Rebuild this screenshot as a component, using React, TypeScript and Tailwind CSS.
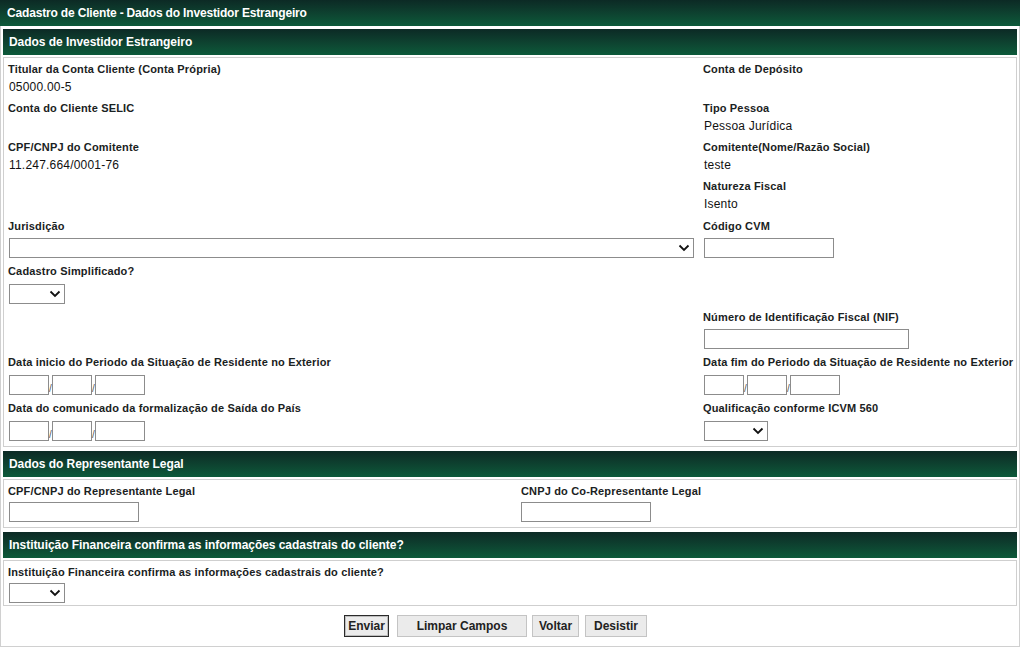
import React from "react";

const F = { fontFamily: '"Liberation Sans", Arial, sans-serif' };

function Chevron() {
  return (
    <svg width="12" height="8" viewBox="0 0 12 8" className="mr-[3px]">
      <polyline points="1.5,1.5 6,6 10.5,1.5" fill="none" stroke="#111" strokeWidth="1.8" />
    </svg>
  );
}

function Select({ w }: { w: string }) {
  return (
    <div className={`${w} h-[20px] ml-[1px] border border-[#8c8c8c] bg-white flex items-center justify-end`}>
      <Chevron />
    </div>
  );
}

function Input({ w }: { w: string }) {
  return <div className={`${w} h-[20px] border border-[#8c8c8c] bg-white`} />;
}

function DateInputs() {
  return (
    <div className="flex items-end ml-[1px]">
      <div className="w-[40px] h-[20px] border border-[#8c8c8c] bg-white" />
      <span className="w-[3px] text-[10px] leading-[12px] text-[#555] overflow-visible">/</span>
      <div className="w-[40px] h-[20px] border border-[#8c8c8c] bg-white" />
      <span className="w-[3px] text-[10px] leading-[12px] text-[#555] overflow-visible">/</span>
      <div className="w-[50px] h-[20px] border border-[#8c8c8c] bg-white" />
    </div>
  );
}

function L({ children }: { children?: React.ReactNode }) {
  return (
    <div className="h-[20px] leading-[20px] text-[11px] font-bold text-[#1a2222] whitespace-nowrap tracking-[0.16px]">
      {children}
    </div>
  );
}

function V({ children }: { children?: React.ReactNode }) {
  return (
    <div className="h-[19px] leading-[17px] text-[12px] text-[#111] whitespace-nowrap pl-[1px] tracking-[0.2px]">
      {children}
    </div>
  );
}

function Header({ children }: { children: React.ReactNode }) {
  return (
    <div className="h-[26px] bg-gradient-to-b from-[#0c2a25] to-[#0c5a3a] flex items-center pl-[6px] text-white text-[12px] font-bold tracking-[-0.05px]">
      {children}
    </div>
  );
}

export default function App() {
  return (
    <div style={F} className="w-[1024px] h-[650px] bg-white">
      <div className="w-[1020px]">
        <div className="h-[26px] bg-gradient-to-b from-[#0c2a25] to-[#0c5a3a] flex items-center pl-[7px] text-white text-[12px] font-bold tracking-[-0.17px]">
          Cadastro de Cliente - Dados do Investidor Estrangeiro
        </div>
        <div className="border-x border-b border-[#d0d0d0] px-[2px] pt-[3px] h-[621px]">
          {/* Section 1 */}
          <Header>Dados de Investidor Estrangeiro</Header>
          <div className="mt-[2px] border border-[#cfcfcf] pl-[4px] pt-[1px] pb-[2px] grid grid-cols-[695px_1fr]">
            <L>Titular da Conta Cliente (Conta Própria)</L>
            <L>Conta de Depósito</L>
            <V>05000.00-5</V>
            <V></V>
            <L>Conta do Cliente SELIC</L>
            <L>Tipo Pessoa</L>
            <V></V>
            <V>Pessoa Jurídica</V>
            <L>CPF/CNPJ do Comitente</L>
            <L>Comitente(Nome/Razão Social)</L>
            <V>11.247.664/0001-76</V>
            <V>teste</V>
            <L></L>
            <L>Natureza Fiscal</L>
            <V></V>
            <V>Isento</V>
            <div className="pt-[1px]"><L>Jurisdição</L></div>
            <div className="pt-[1px]"><L>Código CVM</L></div>
            <div className="h-[25px] pt-[2px]"><Select w="w-[685px]" /></div>
            <div className="h-[25px] pt-[2px] pl-[1px]"><Input w="w-[130px]" /></div>
            <L>Cadastro Simplificado?</L>
            <L></L>
            <div className="h-[26px] pt-[3px]"><Select w="w-[56px]" /></div>
            <div className="h-[26px]" />
            <L></L>
            <L>Número de Identificação Fiscal (NIF)</L>
            <div className="h-[25px] pt-[2px]" />
            <div className="h-[25px] pt-[2px] pl-[1px]"><Input w="w-[205px]" /></div>
            <L>Data inicio do Periodo da Situação de Residente no Exterior</L>
            <L>Data fim do Periodo da Situação de Residente no Exterior</L>
            <div className="h-[26px] pt-[3px]"><DateInputs /></div>
            <div className="h-[26px] pt-[3px]"><DateInputs /></div>
            <L>Data do comunicado da formalização de Saída do País</L>
            <L>Qualificação conforme ICVM 560</L>
            <div className="h-[26px] pt-[3px]"><DateInputs /></div>
            <div className="h-[26px] pt-[3px]"><Select w="w-[64px]" /></div>
          </div>

          {/* Section 2 */}
          <div className="mt-[4px]">
            <Header>Dados do Representante Legal</Header>
          </div>
          <div className="mt-[2px] border border-[#cfcfcf] pl-[4px] pt-[1px] pb-[1px] grid grid-cols-[513px_1fr]">
            <L>CPF/CNPJ do Representante Legal</L>
            <L>CNPJ do Co-Representante Legal</L>
            <div className="h-[25px] pt-[1px] pl-[1px]"><Input w="w-[130px]" /></div>
            <div className="h-[25px] pt-[1px]"><Input w="w-[130px]" /></div>
          </div>

          {/* Section 3 */}
          <div className="mt-[4px]">
            <Header>Instituição Financeira confirma as informações cadastrais do cliente?</Header>
          </div>
          <div className="mt-[2px] border border-[#cfcfcf] pl-[4px] pt-[1px] pb-[1px]">
            <L>Instituição Financeira confirma as informações cadastrais do cliente?</L>
            <div className="h-[22px] pt-[1px]"><Select w="w-[56px]" /></div>
          </div>

          {/* Buttons */}
          <div className="flex items-center h-[39px] pl-[341px] text-[12px] font-bold text-[#222]">
            <button className="h-[22px] w-[45px] border border-[#2a2a2a] bg-[#ebebeb] outline outline-1 outline-[#bdbdbd] -outline-offset-2">Enviar</button>
            <button className="h-[22px] w-[130px] ml-[8px] border border-[#c4c4c4] bg-[#ebebeb]">Limpar Campos</button>
            <button className="h-[22px] w-[47px] ml-[5px] border border-[#c4c4c4] bg-[#ebebeb]">Voltar</button>
            <button className="h-[22px] w-[62px] ml-[6px] border border-[#c4c4c4] bg-[#ebebeb]">Desistir</button>
          </div>
        </div>
      </div>
    </div>
  );
}
